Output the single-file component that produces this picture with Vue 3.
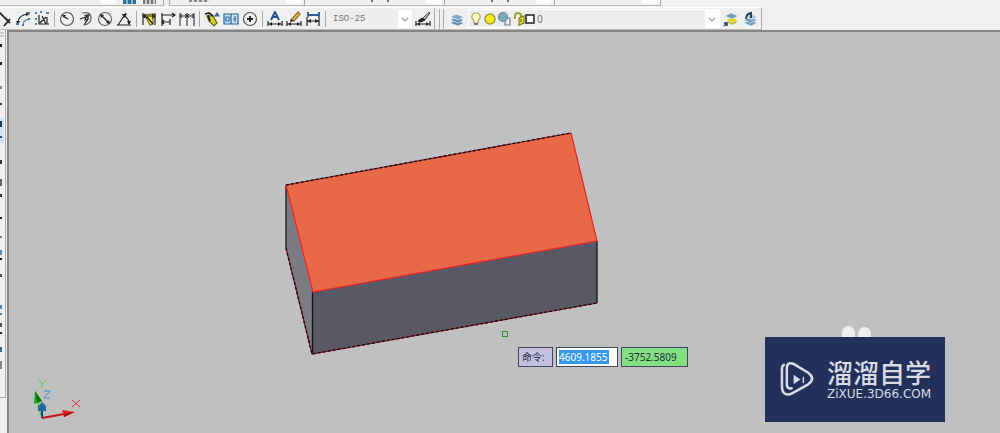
<script setup>
import { ref } from 'vue'

const x = ref('4609.1855')
const tools = [
  ['linear', 'arc', 'ordinate'],
  ['radius', 'jogged', 'diameter', 'angular'],
  ['quick', 'baseline', 'continue'],
  ['tolerance', 'reference', 'center'],
  ['textedit', 'edit', 'update'],
]
const marks = [
  [15, 3, '#222'], [33, 3, '#222'], [57, 3, '#888'], [74, 2, '#333'], [92, 6, '#1c355c'], [107, 2, '#1c4d85'],
  [131, 4, '#333'], [150, 7, '#666'], [165, 3, '#333'], [188, 2, '#222'], [207, 2, '#777'], [221, 5, '#5d8db8'], [229, 2, '#111'],
  [245, 3, '#555'], [276, 4, '#568bc0'], [284, 2, '#4676a8'], [294, 4, '#555'], [303, 2, '#222'], [318, 5, '#39699a'], [332, 8, '#888'],
]
</script>

<template>
  <div class="app">
    <header class="bars">
      <div class="upper">
        <div class="seg first"><i class="field"></i><i class="chip blue"></i><i class="chip"></i></div>
        <div class="seg color"><i class="trace wide"></i><i class="field"></i></div>
        <div class="seg line"><i class="trace"></i><i class="field"></i></div>
        <div class="seg weight"><i class="trace near"></i><i class="field"></i></div>
        <div class="seg last"><i class="field"></i></div>
      </div>
      <div class="lower">
        <div class="toolbar dim">
          <template v-for="(group, g) in tools" :key="g">
            <button v-for="name in group" :key="name" class="tool" :aria-label="name">
              <svg viewBox="0 0 16 16" fill="none" stroke="#222" stroke-width="1.2">
                <template v-if="name === 'linear'"><path d="M3 1 14 12M8 15l6-7M10 8l4 4" stroke-width="1.8" /></template>
                <template v-else-if="name === 'arc'">
                  <path d="M3 12Q3 4 13 3" /><path d="M1 10l2 4 2-4zM11 1l4 2-4 2z" fill="#222" stroke="none" />
                  <path d="M8 14q0-5 6-6" stroke="#457fae" /><path d="M1 13h3M7 14h2M13 8h2M12 2h3" stroke="#3e7dad" stroke-width="2" />
                </template>
                <template v-else-if="name === 'ordinate'">
                  <path d="M5 4v9h10M6 12l6-6M8 5l4 8M13 6v7" /><path d="M1 2h2M6 1h2M12 2h3M1 8h2M1 13h2M13 13h2" stroke="#4b83ac" stroke-width="2" />
                </template>
                <template v-else-if="name === 'radius'"><circle cx="8" cy="8" r="6.5" stroke="#555" /><path d="M4 5 9 8" /><path d="m3 4 4 0-2 3z" fill="#222" stroke="none" /></template>
                <template v-else-if="name === 'jogged'"><path d="M4 2q9-2 9 5 0 6-7 7" stroke="#666" /><path d="M2 8 8 6 7 9l3-1-4 6" /><path d="m6 4 6-1-2 5z" fill="#333" stroke="none" /></template>
                <template v-else-if="name === 'diameter'"><circle cx="8" cy="8" r="6.5" stroke="#666" /><path d="m4 4 8 8" /><path d="m3 3 4 1-3 3zM13 13l-4-1 3-3z" fill="#222" stroke="none" /></template>
                <template v-else-if="name === 'angular'"><path d="M1 14h14M2 14 10 2M8 5q5 2 5 8" /><path d="m6 3 5 0-3 4zM11 10h4l-2 4z" fill="#222" stroke="none" /></template>
                <template v-else-if="name === 'quick'"><path d="m4 4 8-1v10l-3 1z" fill="#f5ea21" stroke="#76751c" /><path d="M2 2v12M14 2v12M2 5h12M5 3 2 5l3 2M11 3l3 2-3 2M6 6l6 7" /></template>
                <template v-else-if="name === 'baseline'"><path d="M2 2v13M2 4h13M2 11h8M10 8v6M12 2l3 2-3 2M4 9l-2 2 2 2" /></template>
                <template v-else-if="name === 'continue'"><path d="M1 2v13M8 2v13M15 2v13M1 5h14M3 3 1 5l2 2M6 3l2 2-2 2M10 3 8 5l2 2M13 3l2 2-2 2" stroke-width="1" /></template>
                <template v-else-if="name === 'tolerance'"><path d="m3 5 6 0 4 7-3 3-5-5z" fill="#dbd51d" stroke="#54621f" /><path d="m1 3 4-1 4 3M4 4l2 6" stroke-width="1.8" /><path d="m11 5 2-3 2 3z" fill="#4678b3" stroke="#365f86" /></template>
                <template v-else-if="name === 'reference'"><path d="M1 3h14v10H1zM8 3v10" fill="#c9e1f3" stroke="#2d628d" /><path d="M3 6h3v4H3zM10 8h3M12 5v6" stroke="#336c9c" /></template>
                <template v-else-if="name === 'center'"><circle cx="8" cy="8" r="6.5" stroke="#555" /><path d="M5 8h6M8 5v6" stroke-width="1.8" /></template>
                <template v-else-if="name === 'textedit'"><path d="m4 9 4-8 4 8M5 6h6" stroke="#235489" stroke-width="2" /><path d="M1 10v5M15 10v5M1 13h14" /><path d="M2 13l3-2v4zM14 13l-3-2v4z" fill="#222" stroke="none" /></template>
                <template v-else-if="name === 'edit'"><path d="m5 9 7-8 2 2-6 7z" fill="#e7bd50" stroke="#9b6f32" /><path d="M1 10v5M15 10v5M1 13h14" /><path d="M2 13l3-2v4zM14 13l-3-2v4zM4 11l1-3 3 2z" fill="#222" stroke="none" /></template>
                <template v-else><path d="M3 1v5M14 1v5M3 4h11" stroke="#2b6191" stroke-width="1.8" /><path d="M2 6v9M14 6v9M2 10h12" /><path d="M2 10l4-2v4zM14 10l-4-2v4z" fill="#222" stroke="none" /></template>
              </svg>
            </button>
            <span class="sep"></span>
          </template>
          <select class="style" aria-label="Dimension style"><option>ISO-25</option></select>
          <button class="tool" aria-label="Dimension style manager">
            <svg viewBox="0 0 16 16" fill="none" stroke="#222"><path d="m7 8 7-7 1 1-5 7z" fill="#b4aa98" stroke="#555" /><path d="m3 10 4-3 3 2-4 2z" fill="#222" /><path d="M1 10v5M15 10v5M1 13h14" stroke-width="1.2" /><path d="M2 13l3-2v4zM14 13l-3-2v4z" fill="#222" stroke="none" /></svg>
          </button>
        </div>
        <div class="toolbar layers">
          <span class="grip"></span>
          <button class="tool" aria-label="Layer properties">
            <svg viewBox="0 0 16 16" fill="#6087ac" stroke="#e9f4fb" stroke-width=".7"><path d="m1 12 6-3 8 3-6 3z" /><path d="m1 9 6-3 8 3-6 3z" /><path d="m1 6 6-3 8 3-6 3z" fill="#89a9c3" /></svg>
          </button>
          <div class="layer">
            <svg class="states" viewBox="0 0 66 16" fill="none" stroke-width="1.2">
              <path d="M5 10C1 6 3 2 7 2s6 4 2 8v2H5z" fill="#fffac0" stroke="#b9a85f" /><path d="M5 13h4" stroke="#637e95" stroke-width="2" />
              <circle cx="21" cy="8" r="5" fill="#f5ed21" stroke="#9b9d38" stroke-width="1.500" />
              <path d="M36 7h5v7h-5z" fill="#e7edf0" stroke="#6b8190" /><circle cx="34" cy="6" r="4.500" fill="#86a9ba" stroke="#648c9c" />
              <path d="M46 8V5q0-3 3-3t3 3v2" stroke="#a0a127" stroke-width="2" /><path d="m50 7 5-2v7l-5 2z" fill="#eee52c" stroke="#777c22" /><path d="M52 8v3" stroke="#595e27" />
              <path d="M57 4h8v8h-8z" fill="#fff" stroke="#222" stroke-width="1.500" />
            </svg>
            <select aria-label="Layer"><option>0</option></select>
          </div>
          <button class="tool" aria-label="Make object layer current">
            <svg viewBox="0 0 16 16" stroke="#e8eee5" stroke-width=".6"><path d="m3 11 6-3 6 3-6 3z" fill="#b5a816" /><path d="m3 9 6-3 6 3-6 3z" fill="#e3d92c" /><path d="m2 5 6-3 7 3-6 3z" fill="#6f9bc0" /><path d="m1 15 3-3M1 12h3v3" fill="none" stroke="#203d72" stroke-width="1.500" /></svg>
          </button>
          <button class="tool" aria-label="Layer previous">
            <svg viewBox="0 0 16 16" fill="#6c98ba" stroke="#e8f2fa" stroke-width=".6"><path d="m2 12 7-3 6 3-6 3z" /><path d="m2 9 7-3 6 3-6 3z" /><path d="m5 6 5-3 5 3-5 3z" fill="#aac4d9" /><path d="M4 8q0-5 5-6v5" fill="none" stroke="#26435f" stroke-width="2" /></svg>
          </button>
        </div>
      </div>
    </header>
    <main class="work">
      <aside class="side" aria-label="Draw toolbar">
        <svg viewBox="0 0 6 366" width="6" height="366">
          <path d="M0 3H4M0 6H4" stroke="#aaa" />
          <path d="M0 88H4v25H0z" fill="#cfe5f7" />
          <rect v-for="m in marks" :key="m[0]" x="0" :y="m[0] - 1" width="2" :height="m[1]" :fill="m[2]" />
        </svg>
      </aside>
      <section class="canvas" aria-label="Drawing">
        <svg class="solid" viewBox="280 128 324 232" width="324" height="232">
          <path d="m286 185 27 107-1 62-26-106z" fill="#7b7b82" />
          <path d="m313 292 284-51v62l-285 51z" fill="#595966" />
          <path d="m286 185 285-52 26 108-284 51z" fill="#e96848" />
          <g fill="none">
            <path d="M286 185v63M312.500 292v62M597 241v62" stroke="#16161b" stroke-width="1.300" />
            <path d="m286 185 27 107 284-51-26-108" stroke="#ef2023" stroke-width="1.200" />
            <path d="m286 185 285-52M286 248l26 106 285-51" stroke="#861820" stroke-width="1.200" />
            <path d="m286 185 285-52M286 248l26 106 285-51" stroke="#17090d" stroke-width="1.300" stroke-dasharray="3 2" />
          </g>
        </svg>
        <i class="pick"></i>
        <form class="prompt" @submit.prevent>
          <label for="px">命令:</label>
          <div class="coordinate"><input id="px" v-model="x" /></div>
          <output>-3752.5809</output>
        </form>
        <svg class="ucs" viewBox="30 376 54 46" width="54" height="46" fill="none">
          <path d="m42 415-4-12" stroke="#19df24" stroke-width="3" stroke-dasharray="3 1" /><path d="m35 391-1 13 8-3z" fill="#14ae20" /><path d="m35 391 2 12 5-2z" fill="#097614" />
          <path d="M42 418v-11" stroke="#164d86" stroke-width="2" /><path d="m42 402-4 5v4h8v-5z" fill="#2166a5" />
          <path d="m42 418 22-4" stroke="#c71118" stroke-width="2" /><path d="m62 410 13 2-11 5z" fill="#e51b20" /><path d="m64 414 11-2-11 5z" fill="#a51218" />
          <path d="m39 380 3 4 4-4M42 384v4" stroke="#4bdb4d" /><path d="M44 391h6l-6 7h6" stroke="#3b8de2" /><path d="m72 400 8 7M80 400l-8 7" stroke="#e22f32" />
        </svg>
        <div class="brand">
          <i class="ear left"></i><i class="ear right"></i>
          <svg class="play" viewBox="0 0 36 38" fill="none" stroke="#d8dce6" stroke-width="2.600" stroke-linecap="round">
            <path d="M2 8v18q0 10 9 8l18-10q8-6 0-12L14 3Q7 0 7 8v16q0 5 5 4" /><path d="M2 8q0-3 2-4" /><path d="m14 14 7 5-7 5z" fill="#d8dce6" stroke="none" /><path d="M24 17v5" stroke-width="1.500" />
          </svg>
          <div class="words"><strong>溜溜自学</strong><span>ZiXUE.3D66.COM</span></div>
        </div>
      </section>
    </main>
  </div>
</template>

<style>
body { margin: 0; }
</style>

<style scoped>
* { box-sizing: border-box; }
.app { min-height: 100vh; display: flex; flex-direction: column; background: #f0f0f0; font: 12px "Noto Sans", "Noto Sans CJK SC", sans-serif; overflow: hidden; }
button { border: 0; padding: 0; background: none; }
.bars { height: 30px; flex: none; }
.upper { display: flex; height: 6px; }
.seg { display: flex; justify-content: flex-end; gap: 7px; border-right: 1px solid #aaa; border-bottom: 1px solid #bbb; height: 6px; padding-right: 3px; flex: none; }
.field { width: 15px; height: 4px; background: #fff; }
.first { width: 164px; padding-right: 7px; }
.chip { width: 13px; height: 4px; background: repeating-linear-gradient(90deg, #777 0 2px, #ccc 2px 4px); }
.chip.blue { background: repeating-linear-gradient(90deg, #346c98 0 3px, #89b7d4 3px 5px); }
.trace { width: 18px; height: 2px; margin-right: auto; margin-left: 66px; border: solid #777; border-width: 0 2px; }
.wide { width: 20px; margin-left: 19px; border: 0; background: repeating-linear-gradient(90deg, #888 0 3px, #ddd 3px 5px); }
.near { margin-left: 46px; }
.color { width: 136px; margin-left: 5px; border-left: 1px solid #aaa; }
.line { width: 140px; }
.weight { width: 110px; }
.last { width: 106px; }
.lower { display: flex; height: 23px; margin-top: 1px; }
.toolbar { height: 23px; display: flex; align-items: center; border: 1px solid #fff; border-right-color: #aaa; border-bottom-color: #bbb; border-left: 0; flex: none; }
.dim { padding-right: 2px; }
.dim > .tool:first-child { margin-left: -6px; }
.tool { width: 19px; height: 20px; display: grid; place-items: center; flex: none; }
.tool svg { width: 16px; height: 16px; display: block; }
.sep { width: 6px; height: 16px; background: linear-gradient(#aaa, #aaa) center / 1px 100% no-repeat; }
select { appearance: none; border: 0; border-radius: 0; height: 18px; padding: 0 4px; color: #777; outline: 0; background: url("data:image/svg+xml,%3Csvg xmlns='http://www.w3.org/2000/svg' width='14' height='18'%3E%3Cpath fill='white' d='M0 0h14v18H0z'/%3E%3Cpath fill='none' stroke='%23aaa' stroke-width='1.500' d='m4 8 3 3 3-3'/%3E%3C/svg%3E") right no-repeat #eee; }
.style { width: 83px; margin: 0 1px; font: 9px "Liberation Mono", monospace; }
.layers { padding-left: 4px; padding-right: 2px; }
.grip { width: 5px; height: 20px; border-left: 1px solid #aaa; border-right: 1px solid #aaa; margin-right: 3px; }
.layer { display: flex; align-items: center; width: 252px; height: 19px; margin: 0 1px 0 2px; background: #eee; border: 1px solid #fff; }
.states { width: 66px; height: 16px; flex: none; }
.layer select { flex: 1; min-width: 0; padding: 0 2px; font: 10px "Noto Sans", sans-serif; }
.work { display: flex; flex: 1; background: #f0f0f0; }
.side { width: 6px; height: 368px; border-right: 1px solid #aaa; border-bottom: 1px solid #aaa; margin-right: 1px; flex: none; overflow: hidden; }
.side svg { display: block; }
.canvas { flex: 1; position: relative; background: #c0c0c0; border-top: 2px solid #858585; border-left: 2px solid #858585; overflow: hidden; }
.solid { position: absolute; left: 271px; top: 96px; }
.pick { position: absolute; left: 493px; top: 299px; width: 6px; height: 6px; border: 1px solid #26952f; }
.prompt { position: absolute; left: 509px; top: 315px; display: flex; gap: 3px; color: #252b3c; line-height: 18px; font-size: 10px; }
.prompt label, .coordinate, .prompt output { height: 20px; border: 1px solid #45455f; }
.prompt label { width: 35px; padding: 0 3px; background: #c4c0df; white-space: nowrap; }
.coordinate { width: 62px; background: #fff; padding: 2px; }
.coordinate input { display: block; width: 50px; height: 14px; padding: 0; border: 0; color: #fff; background: #3498f5; font: 10px "Noto Sans", sans-serif; outline: 0; }
.prompt output { width: 67px; background: #82e082; padding: 0 3px; }
.ucs { position: absolute; left: 21px; bottom: 11px; }
.brand { position: absolute; right: 55px; bottom: 11px; width: 180px; height: 85px; background: #22315a; display: flex; align-items: center; padding-left: 15px; color: #d8dce6; }
.play { width: 35px; height: 37px; flex: none; }
.words { margin-left: 12px; display: flex; flex-direction: column; gap: 2px; white-space: nowrap; }
.words strong { font: 500 26px/26px "Noto Sans CJK SC", sans-serif; }
.words span { font: 12px/14px "DejaVu Sans", sans-serif; }
.ear { position: absolute; top: -11px; width: 13px; height: 11px; background: #eee; border-radius: 7px 7px 0 0; }
.left { left: 77px; }
.right { left: 93px; top: -10px; height: 10px; }
</style>
